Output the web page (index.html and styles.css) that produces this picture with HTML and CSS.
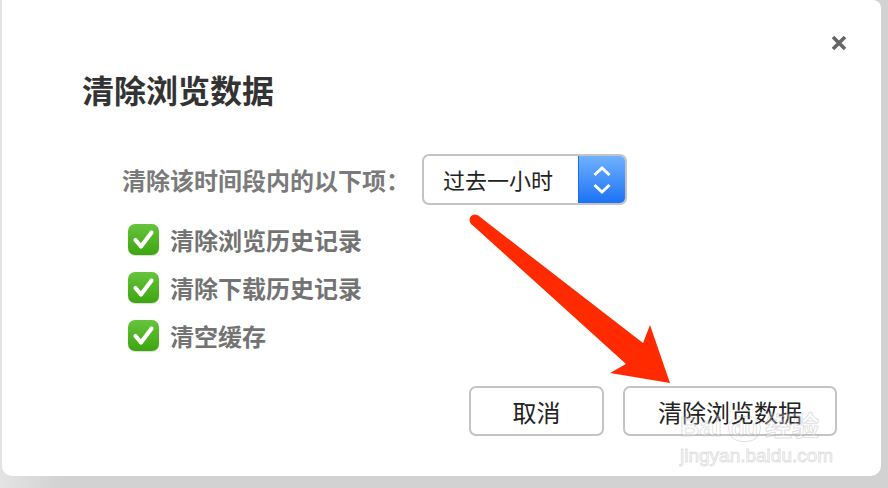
FILE: index.html
```html
<!DOCTYPE html>
<html lang="zh-CN">
<head>
    <meta charset="UTF-8">
    <title>清除浏览数据</title>
    <link rel="stylesheet" href="styles.css">
</head>
<body>
    <div class="dialog">
        <button class="close-btn" aria-label="关闭">
            <svg width="18" height="18" viewBox="0 0 18 18">
                <path d="M3 3 L15 15 M15 3 L3 15" stroke="#666" stroke-width="3.6" stroke-linecap="butt"/>
            </svg>
        </button>

        <h1 class="title">清除浏览数据</h1>

        <div class="range-row">
            <span class="range-label">清除该时间段内的以下项：</span>
            <div class="select">
                <span class="select-value">过去一小时</span>
                <span class="select-arrows">
                    <svg width="20" height="32" viewBox="0 0 20 32">
                        <path d="M2.5 11 L10 4 L17.5 11 M2.5 21 L10 28 L17.5 21" fill="none" stroke="#fff" stroke-width="3" stroke-linejoin="miter"/>
                    </svg>
                </span>
            </div>
        </div>

        <ul class="options">
            <li><span class="check"><svg width="31" height="31" viewBox="0 0 31 31"><path d="M7.5 16 L13 22.5 L23.5 8.5" fill="none" stroke="#fff" stroke-width="4.2" stroke-linecap="round" stroke-linejoin="round"/></svg></span>清除浏览历史记录</li>
            <li><span class="check"><svg width="31" height="31" viewBox="0 0 31 31"><path d="M7.5 16 L13 22.5 L23.5 8.5" fill="none" stroke="#fff" stroke-width="4.2" stroke-linecap="round" stroke-linejoin="round"/></svg></span>清除下载历史记录</li>
            <li><span class="check"><svg width="31" height="31" viewBox="0 0 31 31"><path d="M7.5 16 L13 22.5 L23.5 8.5" fill="none" stroke="#fff" stroke-width="4.2" stroke-linecap="round" stroke-linejoin="round"/></svg></span>清空缓存</li>
        </ul>

        <div class="footer">
            <button class="btn btn-cancel">取消</button>
            <button class="btn btn-clear">清除浏览数据</button>
        </div>

        <svg class="pointer" width="888" height="488" viewBox="0 0 888 488">
            <circle cx="475" cy="220" r="5.5" fill="#ff2a00"/>
            <polygon points="478.5,215.8 643,343 650,325 670,383 610,373 626,364 471.5,224.2" fill="#ff2a00"/>
        </svg>

        <div class="watermark">
            <div class="wm-brand">Bai<span class="wm-paw">du</span>经验</div>
            <div class="wm-url">jingyan.baidu.com</div>
        </div>
    </div>
</body>
</html>
```

FILE: styles.css
```css
body {
    margin: 0;
    width: 888px;
    height: 488px;
    overflow: hidden;
    background: linear-gradient(to right, #e4e4e4 0, #d2d2d2 60px, #d2d2d2 100%);
    font-family: "Noto Sans CJK SC", "Noto Sans", sans-serif;
}
.dialog {
    position: relative;
    box-sizing: border-box;
    width: 879px;
    height: 476px;
    margin-left: 2px;
    padding: 70px 44px 0 80px;
    background: #fff;
    border-radius: 0 8px 10px 10px;
}
.close-btn {
    position: absolute;
    top: 34px;
    right: 33px;
    padding: 0;
    border: none;
    background: none;
    cursor: pointer;
}
.title {
    margin: 0;
    font-size: 32px;
    line-height: 39px;
    font-weight: 700;
    color: #333;
}
.range-row {
    display: flex;
    align-items: center;
    margin-top: 45px;
    padding-left: 40px;
}
.range-label {
    font-size: 24px;
    font-weight: 700;
    color: #7a7a7a;
    width: 300px;
}
.select {
    display: flex;
    box-sizing: border-box;
    width: 205px;
    height: 51px;
    border: 2px solid #c4c4c4;
    border-radius: 7px;
    overflow: hidden;
}
.select-value {
    flex: 1;
    padding-left: 19px;
    font-size: 22px;
    line-height: 47px;
    color: #222;
}
.select-arrows {
    display: flex;
    align-items: center;
    justify-content: center;
    width: 46px;
    background: linear-gradient(#70b2ff, #1b72f4);
    border-left: 1px solid #1a6ee8;
}
.options {
    list-style: none;
    margin: 19px 0 0;
    padding: 0 0 0 46px;
}
.options li {
    display: flex;
    align-items: center;
    height: 31px;
    margin-bottom: 17px;
    font-size: 24px;
    font-weight: 700;
    color: #737373;
}
.check {
    display: flex;
    width: 31px;
    height: 31px;
    margin-right: 11px;
    border-radius: 7px;
    background: linear-gradient(#66c43a, #3da50f);
    box-shadow: 0 1px 1px rgba(0, 0, 0, 0.15);
}
.footer {
    display: flex;
    justify-content: flex-end;
    gap: 19px;
    margin-top: 35px;
}
.btn {
    box-sizing: border-box;
    height: 50px;
    border: 2px solid #c4c4c4;
    border-radius: 7px;
    background: #fff;
    font-family: "Noto Sans CJK SC", "Noto Sans", sans-serif;
    font-size: 24px;
    color: #222;
    cursor: pointer;
}
.btn-cancel {
    width: 135px;
}
.btn-clear {
    width: 214px;
}
.pointer {
    position: absolute;
    left: -2px;
    top: 0;
    pointer-events: none;
}
.watermark {
    position: absolute;
    left: 678px;
    top: 410px;
    color: rgba(255, 255, 255, 0.3);
    -webkit-text-stroke: 1px rgba(150, 150, 150, 0.3);
    font-family: "Liberation Sans", "Noto Sans CJK SC", sans-serif;
    pointer-events: none;
}
.wm-brand {
    font-size: 27px;
    font-weight: 700;
    line-height: 34px;
}
.wm-paw {
    display: inline-block;
    margin: 0 4px 0 6px;
    padding: 0 2px;
    border: 1px solid rgba(150, 150, 150, 0.3);
    border-radius: 12px 12px 14px 14px;
    font-size: 22px;
    line-height: 24px;
}
.wm-url {
    font-size: 19px;
    line-height: 24px;
}
```
